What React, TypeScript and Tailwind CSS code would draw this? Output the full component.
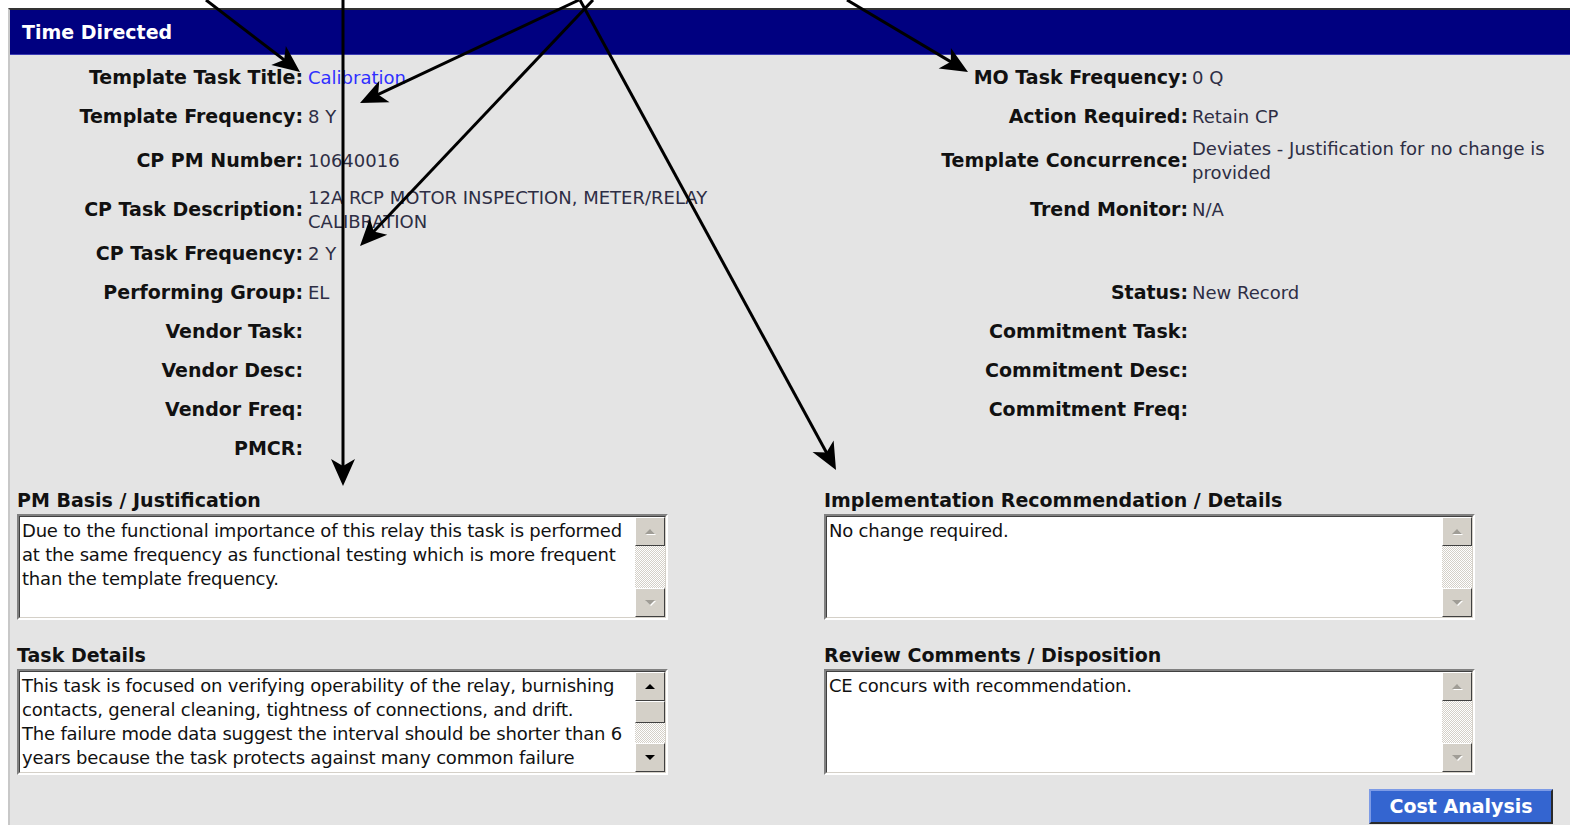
import React from 'react';

type Field = { label: string; value?: React.ReactNode };
type Row = { h: string; left: Field; right?: Field };

const ROWS: Row[] = [
  { h: 'h-[39px]', left: { label: 'Template Task Title:', value: <span className="text-[#2f2fff]">Calibration</span> }, right: { label: 'MO Task Frequency:', value: '0 Q' } },
  { h: 'h-[39px]', left: { label: 'Template Frequency:', value: '8 Y' }, right: { label: 'Action Required:', value: 'Retain CP' } },
  { h: 'h-[49px]', left: { label: 'CP PM Number:', value: '10640016' }, right: { label: 'Template Concurrence:', value: 'Deviates - Justification for no change is provided' } },
  { h: 'h-[49px]', left: { label: 'CP Task Description:', value: '12A RCP MOTOR INSPECTION, METER/RELAY CALIBRATION' }, right: { label: 'Trend Monitor:', value: 'N/A' } },
  { h: 'h-[39px]', left: { label: 'CP Task Frequency:', value: '2 Y' } },
  { h: 'h-[39px]', left: { label: 'Performing Group:', value: 'EL' }, right: { label: 'Status:', value: 'New Record' } },
  { h: 'h-[39px]', left: { label: 'Vendor Task:' }, right: { label: 'Commitment Task:' } },
  { h: 'h-[39px]', left: { label: 'Vendor Desc:' }, right: { label: 'Commitment Desc:' } },
  { h: 'h-[39px]', left: { label: 'Vendor Freq:' }, right: { label: 'Commitment Freq:' } },
  { h: 'h-[39px]', left: { label: 'PMCR:' } },
];

// callout arrows drawn over the form
const ARROWS = [
  { x1: 206, y1: 0, x2: 300, y2: 72 },
  { x1: 343, y1: 0, x2: 343, y2: 486 },
  { x1: 579, y1: 0, x2: 360, y2: 103 },
  { x1: 593, y1: 0, x2: 360, y2: 246 },
  { x1: 580, y1: 0, x2: 836, y2: 470 },
  { x1: 847, y1: 0, x2: 968, y2: 72 },
];

function Arrows() {
  return (
    <svg className="pointer-events-none absolute inset-0" width="1570" height="825">
      {ARROWS.map((a, i) => {
        const dx = a.x2 - a.x1;
        const dy = a.y2 - a.y1;
        const len = Math.hypot(dx, dy);
        const ux = dx / len;
        const uy = dy / len;
        const ang = (Math.atan2(dy, dx) * 180) / Math.PI;
        return (
          <g key={i}>
            <line x1={a.x1} y1={a.y1} x2={a.x2 - ux * 12} y2={a.y2 - uy * 12} stroke="#000" strokeWidth="3" />
            <path d="M0,0 L-27,-12 L-20,0 L-27,12 Z" fill="#000" transform={`translate(${a.x2} ${a.y2}) rotate(${ang})`} />
          </g>
        );
      })}
    </svg>
  );
}

function ScrollBtn({ up, active }: { up?: boolean; active?: boolean }) {
  return (
    <div className="flex h-[29px] items-center justify-center border border-t-white border-l-white border-b-[#404040] border-r-[#404040] bg-[#d4d0c8]">
      <svg width="12" height="8" viewBox="0 0 12 8">
        {!active && <path d={up ? 'M2,7 L7,2 L12,7 Z' : 'M2,2 L12,2 L7,7 Z'} fill="#fff" />}
        <path d={up ? 'M1,6 L6,1 L11,6 Z' : 'M1,1 L11,1 L6,6 Z'} fill={active ? '#000' : '#a09d96'} />
      </svg>
    </div>
  );
}

function ScrollBar({ active }: { active?: boolean }) {
  return (
    <div className="flex w-[30px] shrink-0 flex-col bg-[repeating-conic-gradient(#d4d0c8_0_25%,#ffffff_0_50%)] bg-size-[2px_2px]">
      <ScrollBtn up active={active} />
      {active && <div className="h-[22px] border border-t-white border-l-white border-b-[#404040] border-r-[#404040] bg-[#d4d0c8]" />}
      <div className="flex-1" />
      <ScrollBtn active={active} />
    </div>
  );
}

function TextBox({ title, text, active }: { title: string; text: string; active?: boolean }) {
  return (
    <div>
      <div className="mb-[2px] text-[19px] leading-6 font-bold text-[#111]">{title}</div>
      <div className="h-[106px] w-[651px] border-2 border-t-[#808080] border-l-[#808080] border-b-white border-r-white">
        <div className="flex h-full border border-t-[#404040] border-l-[#404040] border-b-[#d4d0c8] border-r-[#d4d0c8] bg-white">
          <div className="flex-1 overflow-hidden whitespace-pre-line pl-[2px] pt-[2px] text-[18px] leading-6 tracking-[-0.2px] text-[#111]">{text}</div>
          <ScrollBar active={active} />
        </div>
      </div>
    </div>
  );
}

function Cell({ f, labelW, valueW, gap }: { f?: Field; labelW: string; valueW: string; gap: string }) {
  return (
    <>
      <div className={`${labelW} shrink-0 text-right text-[19px] font-bold text-[#111]`}>{f?.label}</div>
      <div className={`${valueW} ${gap} shrink-0 text-[18px] leading-6 text-[#2e2e44]`}>{f?.value}</div>
    </>
  );
}

export default function App() {
  return (
    <div className="relative h-screen w-full overflow-hidden bg-white font-['DejaVu_Sans',sans-serif]">
      <div className="ml-2 mt-2 h-[817px] border-t-2 border-l-2 border-t-[#333] border-l-[#c8c8c8] bg-[#e4e4e4]">
        <div className="flex h-[45px] items-center border-b border-[#3c3cb4] bg-[#000080] pl-3 text-[19px] font-bold text-white">
          Time Directed
        </div>

        <div className="mt-[3px]">
          {ROWS.map((r, i) => (
            <div key={i} className={`flex items-center ${r.h}`}>
              <Cell f={r.left} labelW="w-[293px]" valueW="w-[430px]" gap="ml-[5px]" />
              <Cell f={r.right} labelW="w-[450px]" valueW="w-[368px]" gap="ml-[4px]" />
            </div>
          ))}
        </div>

        <div className="mt-[20px] grid grid-cols-[651px_651px] gap-x-[156px] gap-y-[23px] pl-[7px]">
          <TextBox
            title="PM Basis / Justification"
            text="Due to the functional importance of this relay this task is performed at the same frequency as functional testing which is more frequent than the template frequency."
          />
          <TextBox title="Implementation Recommendation / Details" text="No change required." />
          <TextBox
            title="Task Details"
            active
            text={'This task is focused on verifying operability of the relay, burnishing contacts, general cleaning, tightness of connections, and drift.\nThe failure mode data suggest the interval should be shorter than 6 years because the task protects against many common failure'}
          />
          <TextBox title="Review Comments / Disposition" text="CE concurs with recommendation." />
        </div>

        <div className="mt-[14px] flex justify-end pr-[17px]">
          <button className="h-[35px] w-[184px] border-2 border-t-[#7d9be6] border-l-[#7d9be6] border-b-[#2a2a2a] border-r-[#2a2a2a] bg-[#3465d0] text-[19px] font-bold text-white">
            Cost Analysis
          </button>
        </div>
      </div>
      <Arrows />
    </div>
  );
}
